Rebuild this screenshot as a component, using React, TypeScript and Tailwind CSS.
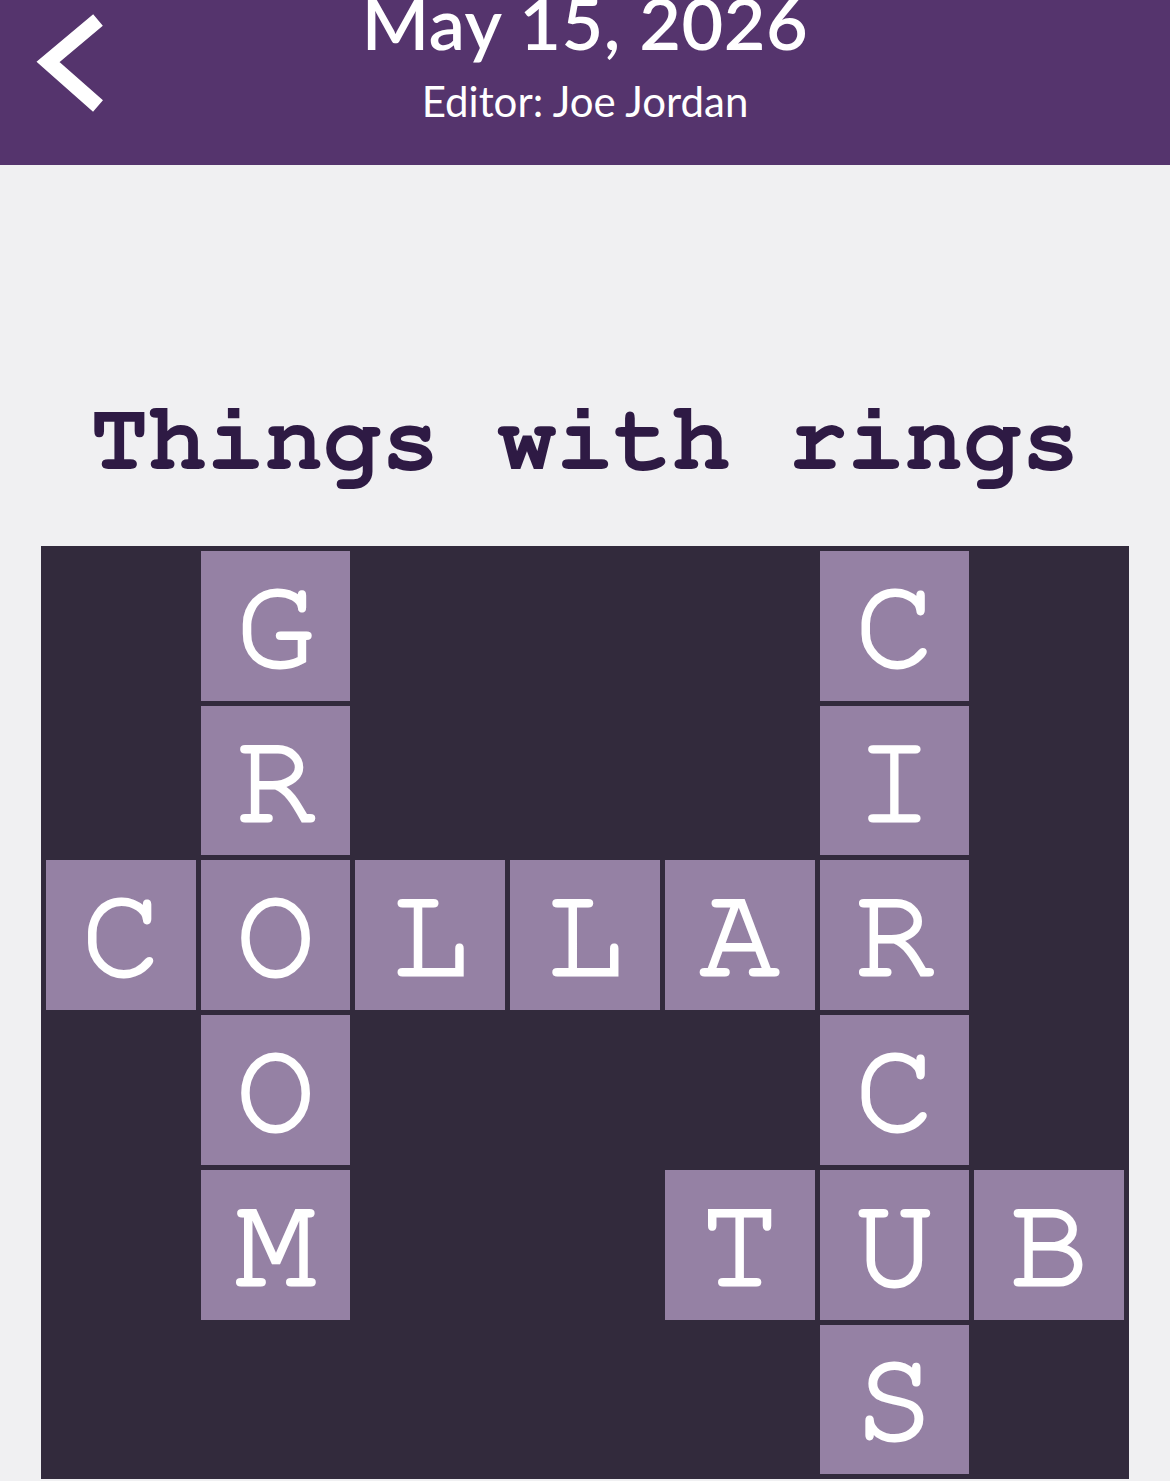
import React from "react";

const rows: string[][] = [
  ["", "G", "", "", "", "C", ""],
  ["", "R", "", "", "", "I", ""],
  ["C", "O", "L", "L", "A", "R", ""],
  ["", "O", "", "", "", "C", ""],
  ["", "M", "", "", "T", "U", "B"],
  ["", "", "", "", "", "S", ""],
];

export default function App() {
  return (
    <div className="w-[1170px] h-[1481px] overflow-hidden bg-[#f0f0f2]">
      <header className="relative h-[165px] bg-[#55346d] flex flex-col items-center text-white font-['Lato',sans-serif]">
        <svg
          className="absolute left-[36px] top-[12px]"
          width="72"
          height="102"
          viewBox="0 0 72 102"
        >
          <path
            d="M62 8 L12 50 L62 94"
            fill="none"
            stroke="white"
            strokeWidth="15"
            strokeLinecap="butt"
            strokeLinejoin="miter"
          />
        </svg>
        <div className="mt-[-14px] text-[72px] leading-none font-semibold tracking-[0.5px]">
          May 15, 2026
        </div>
        <div className="mt-[22px] text-[42px] leading-none">Editor: Joe Jordan</div>
      </header>
      <main className="flex flex-col items-center">
        <h1 className="mt-[226px] whitespace-pre text-[97px] leading-none font-bold text-[#2e1a44] font-['Nimbus_Mono_PS','FreeMono','Liberation_Mono',monospace]">
          Things with rings
        </h1>
        <div className="mt-[58px] w-[1088px] bg-[#322a3c] p-[5px] grid grid-cols-7 gap-[5px]">
          {rows.flat().map((ch, i) =>
            ch ? (
              <div
                key={i}
                className="aspect-square bg-[#9581a4] flex items-center justify-center text-white text-[132px] leading-none font-['Nimbus_Mono_PS','FreeMono','Liberation_Mono',monospace] [-webkit-text-stroke:3px_white]"
              >
                {ch}
              </div>
            ) : (
              <div key={i} className="aspect-square" />
            )
          )}
        </div>
      </main>
    </div>
  );
}
